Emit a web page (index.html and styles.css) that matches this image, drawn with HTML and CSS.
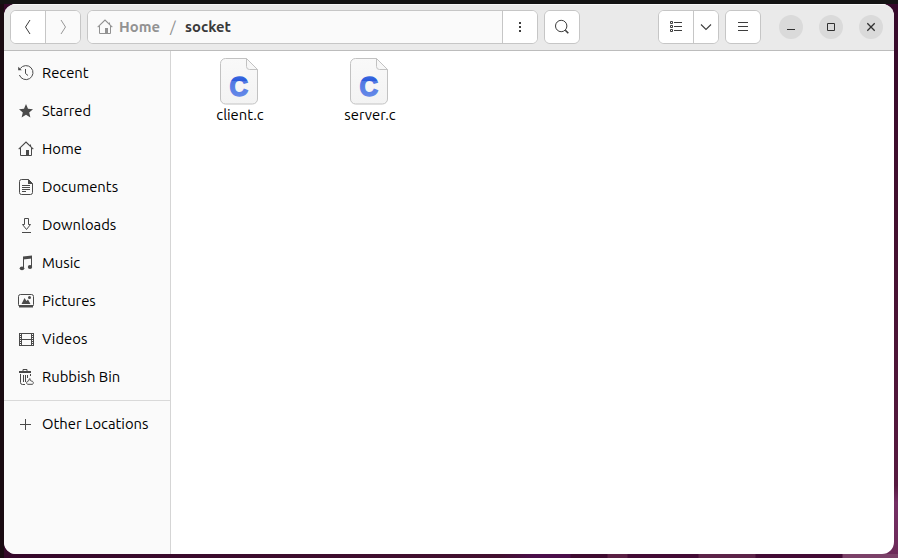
FILE: index.html
```html
<!DOCTYPE html>
<html lang="en">
<head>
<meta charset="utf-8">
<title>socket</title>
<link rel="stylesheet" href="styles.css">
</head>
<body>
<svg class="defs" width="0" height="0">
  <defs>
    <linearGradient id="paper" x1="0" y1="0" x2="0" y2="1"><stop offset="0" stop-color="#f9f9f9"/><stop offset="1" stop-color="#f3f3f3"/></linearGradient>
    <linearGradient id="ink" gradientUnits="userSpaceOnUse" x1="0" y1="-22" x2="0" y2="0"><stop offset="0" stop-color="#3f6ce0"/><stop offset=".3" stop-color="#2c5cdc"/><stop offset=".3" stop-color="#4f77e2"/><stop offset="1" stop-color="#6488e8"/></linearGradient>
    <symbol id="house" viewBox="0 0 16 16">
      <path d="M.7 8.2 8 1l7.300 7.200M12.500 5V3.500" fill="none" stroke="currentColor" stroke-width="1.100"/>
      <path d="M2.500 7v7.500h11V7" fill="none" stroke="currentColor"/>
      <path d="M8 9h3v5.500H8z" fill="currentColor"/>
    </symbol>
    <symbol id="cfile" viewBox="0 0 38 47">
      <path d="M5.500.5H26.500L37.500 11.500V41a5 5 0 0 1-5 5H5.500a5 5 0 0 1-5-5V5.500a5 5 0 0 1 5-5z" fill="url(#paper)" stroke="#c2c2c2"/>
      <path d="M26.500.5V8.500a3 3 0 0 0 3 3h8z" fill="#f7f7f7" stroke="#c2c2c2"/>
    </symbol>
  </defs>
</svg>
<main class="window">
  <header class="bar">
    <div class="group nav">
      <button class="w35"><svg width="16" height="16"><path d="M10 1 5.500 8l4.500 7" /></svg></button>
      <button class="off"><svg width="16" height="16"><path d="M6 1l4.500 7L6 15"/></svg></button>
    </div>
    <div class="group path">
      <div class="crumbs"><svg class="home" width="16" height="16"><use href="#house"/></svg><span class="parent">Home</span><span class="slash">/</span><span class="current">socket</span></div>
      <button><svg width="16" height="16"><path class="fill" d="M7 3h2v2H7zM7 7h2v2H7zM7 11h2v2H7z"/></svg></button>
    </div>
    <div class="group search"><button><svg width="16" height="16"><circle cx="7.200" cy="7" r="5.700"/><path d="m11.300 11.300 3 3" stroke-width="1.600"/></svg></button></div>
    <div class="group view">
      <button><svg width="16" height="16"><path d="M2.500 2.500h2v2h-2zM2.500 6.500h2v2h-2zM2.500 10.500h2v2h-2zM6 3.500h8M6 7.500h8M6 11.500h8"/></svg></button>
      <button class="drop"><svg width="16" height="16"><path d="m3 5.500 5 5 5-5" stroke-width="1.100"/></svg></button>
    </div>
    <div class="group menu"><button><svg width="16" height="16"><path d="M3 3.500h10M3 7.500h10M3 11.500h10"/></svg></button></div>
    <div class="controls">
      <button><svg width="16" height="16"><path d="M4 10.500h8"/></svg></button>
      <button><svg width="16" height="16"><path d="M4.500 4.500h7v7h-7z"/></svg></button>
      <button><svg width="16" height="16"><path d="m4.300 4.300 7.400 7.400M11.700 4.300l-7.400 7.400" stroke-width="1.300"/></svg></button>
    </div>
  </header>
  <div class="body">
    <nav class="side">
      <a><svg width="16" height="16"><path d="M2.300 3.500A7 7 0 1 1 1.400 10M7.500 4v4.500l2.500 2"/><path class="fill" d="M.2 1.700v3.600h3.600z"/></svg><span>Recent</span></a>
      <a><svg width="16" height="16"><path class="fill" d="m8 1 2 4.800 5 .4-3.800 3.300 1.200 5L8 11.800l-4.400 2.700 1.200-5L1 6.200l5-.4z"/></svg><span>Starred</span></a>
      <a><svg width="16" height="16"><use href="#house"/></svg><span>Home</span></a>
      <a><svg width="16" height="16"><path d="M3.500.5h7l4 4v9a2 2 0 0 1-2 2h-9a2 2 0 0 1-2-2v-11a2 2 0 0 1 2-2zM4 6.500h8M4 8.500h8M4 10.500h8M4 12.500h4"/><path class="fill" d="M10 0v5h5z"/></svg><span>Documents</span></a>
      <a><svg width="16" height="16"><path d="M6.500 1.500h4v6h2l-4 5-4-5h2zM4 15.500h9"/></svg><span>Downloads</span></a>
      <a><svg width="16" height="16"><path class="fill" d="M5 1.500 14 .5v3L5 4.500z"/><path d="M5.500 3v10M13.500 2v9.500"/><ellipse class="fill" cx="4" cy="13.300" rx="2.300" ry="1.900"/><ellipse class="fill" cx="12" cy="12" rx="2.200" ry="1.900"/></svg><span>Music</span></a>
      <a><svg width="16" height="16"><rect x=".5" y="1.500" width="15" height="12" rx="2"/><path class="fill" d="M1 12h14v2.500H1zM3.500 11l3-6 2 3 1.500-1.500 2.500 4.500z"/><circle class="fill" cx="11.500" cy="4.500" r="1.500"/></svg><span>Pictures</span></a>
      <a><svg width="16" height="16"><path d="M3.500 2v13M13.500 2v13M3 2.500h11M3 8.500h11M3 14.500h11"/><path d="M1.500 2v13M15.500 2v13"/><path d="M2.500 2v13M14.500 2v13" stroke-dasharray="1 1"/></svg><span>Videos</span></a>
      <a><svg width="16" height="16"><path d="M5 2v-1.500h4v1.500M2.500 5v8.500a2 2 0 0 0 2 2H7M5.500 6v7M7.500 6v7M9.500 6v3M12.500 5v2"/><path class="fill" d="M1 2h12v2H1z"/><path d="M9.500 15.300c-1.500-1-1-3.300 1-3.300.5-1 .5-2 1.500-2.500.5 1.500 0 2 1 2.500 2.500 0 3 2.300 1.500 3.300z"/></svg><span>Rubbish Bin</span></a>
      <hr>
      <a><svg width="16" height="16"><path d="M2 8.500h11M7.500 3v11"/></svg><span class="locations">Other Locations</span></a>
    </nav>
    <section class="files">
      <figure><svg width="38" height="47"><use href="#cfile"/><g transform="translate(9.400 38.200)"><text class="letter" textLength="18.600" lengthAdjust="spacingAndGlyphs">C</text></g></svg><figcaption>client.c</figcaption></figure>
      <figure><svg width="38" height="47"><use href="#cfile"/><g transform="translate(9.400 38.200)"><text class="letter" textLength="18.600" lengthAdjust="spacingAndGlyphs">C</text></g></svg><figcaption>server.c</figcaption></figure>
    </section>
  </div>
</main>
</body>
</html>
```
FILE: styles.css
```css
* { box-sizing: border-box; }
html { background: #35092a; }
body {
  margin: 0; width: 898px; height: 558px; padding: 4px; overflow: hidden;
  font: 14.800px/20px Ubuntu, "Open Sans", "Noto Sans", sans-serif; color: #000;
  background:
    linear-gradient(#141414, #141414) 0 0 / 100% 4px no-repeat,
    linear-gradient(#1a0b12, #1a0b12) 0 0 / 4px 100% no-repeat,
    linear-gradient(90deg, #35072a, #43102f 500px, #4b0e4a 535px, #4b0e4a 570px, #3f0b30 571px, #3f0b30 607px, #5a2043 608px, #5a2043 627px, #430b35 628px, #430b35 698px, #5c2348 699px, #5c2348 755px, #430b35 756px, #430b35 842px, #7b4168 843px) 0 100% / 100% 4px no-repeat,
    linear-gradient(#35092a, #43102f 40%, #571a40 87%, #742f64 90%, #6c2a58) 100% 0 / 20px 100% no-repeat,
    #35092a;
}
.defs { position: absolute; }
.window { height: 550px; border-radius: 12px; overflow: hidden; display: flex; flex-direction: column; background: #fff; }
.bar { height: 47px; flex: none; display: flex; align-items: center; padding: 0 6px 1px; background: #eaeaea; border-bottom: 1px solid #bcbcbc; box-shadow: inset 0 1px #f8f8f8; }
button { font: inherit; border: 0; padding: 0; background: #fff; color: #3d3d3d; display: flex; align-items: center; justify-content: center; flex: 1; }
svg { display: block; flex: none; fill: none; stroke: currentColor; stroke-width: 1; }
svg use { stroke: none; }
.fill { fill: currentColor; stroke: none; }
.letter { font: 700 28.500px "Liberation Sans", Arial, sans-serif; fill: url(#ink); stroke: url(#ink); stroke-width: 1.500; }
.group { height: 34px; border: 1px solid #c6c6c6; border-radius: 6px; display: flex; overflow: hidden; background: #fff; }
.group > * + * { border-left: 1px solid #c6c6c6; }
.nav { width: 71px; }
.nav .w35 { flex: 0 0 34px; }
.nav .off { background: #fafafa; color: #979797; }
.path { width: 451px; margin-left: 6px; }
.path button { flex: 0 0 35px; }
.crumbs { flex: 1; display: flex; align-items: center; background: #fafafa; padding-left: 9px; font-weight: 700; color: #929292; }
.home { margin-right: 6px; color: #929292; }
.parent { width: 42px; }
.slash { margin-left: 9px; width: 15px; font-weight: 400; font-size: 15.500px; }
.current { color: #3a3a3a; }
.search, .menu { width: 36px; }
.search { margin-left: 6px; }
.view { width: 61px; margin-left: 78px; }
.view button:first-child { flex: 0 0 34px; }
.menu { margin-left: 6px; }
.controls { display: flex; gap: 16px; margin-left: 18px; }
.controls button { width: 24px; height: 24px; flex: none; border-radius: 50%; background: #dadada; color: #303030; }
.body { flex: 1; display: flex; }
.side { width: 167px; padding-top: 3px; background: #fafafa; border-right: 1px solid #d5d5d5; }
.side a { height: 38px; display: flex; align-items: center; padding-left: 14px; gap: 8px; }
.side svg { color: #4a4a4a; }
.side hr { margin: 4px 0; border: 0; height: 1px; background: #d9d9d9; }
.files { display: flex; padding: 7px 0 0 3px; }
.files figure { margin: 0; width: 130px; display: flex; flex-direction: column; align-items: center; }
.files figcaption { line-height: 20px; margin-left: 2px; }
```
